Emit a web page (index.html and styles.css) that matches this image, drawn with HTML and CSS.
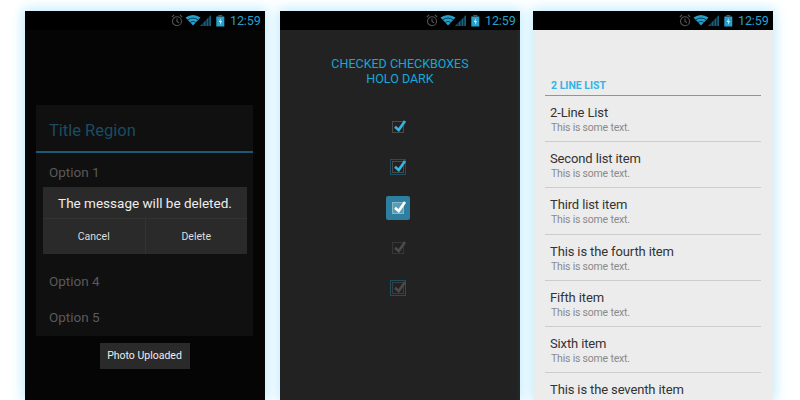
FILE: index.html
```html
<!DOCTYPE html>
<html lang="en">
<head>
<meta charset="utf-8">
<title>Holo UI</title>
<link rel="stylesheet" href="styles.css">
</head>
<body>
<svg class="defs" width="0" height="0" aria-hidden="true">
  <symbol id="status" viewBox="0 0 54 13">
    <g fill="none" stroke="#555" stroke-width="1.100">
      <circle cx="6" cy="7.200" r="4.500"/>
      <path d="M6 4.500v3l2 1.200M.8 3.200L3 1M11.200 3.200L9 1"/>
    </g>
    <path d="M14.500 3.600Q22 -1.600 29.500 3.600L22 11.600Z" fill="#27a0cc"/>
    <path d="M16.800 5.800Q22 2.400 27.200 5.800M19.200 8.300Q22 6.400 24.800 8.300" fill="none" stroke="#052733" stroke-width=".8"/>
    <path d="M29 12L40 1V12Z" fill="#175f7b"/>
    <path d="M32 12V8.500M35 12V5.500M37.800 12V3" stroke="#000" stroke-width=".7"/>
    <rect x="45.300" y="2.500" width="8" height="10" fill="#27a0cc"/>
    <rect x="47.300" y="1" width="4" height="1.500" fill="#555"/>
    <path d="M49.800 4L47.800 8H49.300L48.800 11.200L51.100 7H49.500Z" fill="#d5eef7"/>
  </symbol>
</svg>
<main class="row">
  <section class="phone phone-black">
    <header class="statusbar"><svg class="status-icons"><use href="#status"/></svg><span class="clock">12:59</span></header>
    <div class="dialog">
      <h2 class="dialog-title">Title Region</h2>
      <ul class="options">
        <li>Option 1</li>
        <li></li>
        <li></li>
        <li>Option 4</li>
        <li>Option 5</li>
      </ul>
      <div class="alert">
        <p class="alert-msg">The message will be deleted.</p>
        <div class="alert-actions">
          <span class="alert-btn">Cancel</span>
          <span class="alert-btn">Delete</span>
        </div>
      </div>
    </div>
    <div class="toast-row"><span class="toast">Photo Uploaded</span></div>
  </section>

  <section class="phone phone-dark">
    <header class="statusbar"><svg class="status-icons"><use href="#status"/></svg><span class="clock">12:59</span></header>
    <h2 class="cb-title">CHECKED CHECKBOXES<br>HOLO DARK</h2>
    <div class="cb-list">
      <svg class="cb" viewBox="0 0 24 24"><rect x="6.500" y="6.500" width="11" height="11" fill="none" stroke="#4a4a4a"/><path d="M9 11.800l3.700 3.200L19 6" fill="none" stroke="#33b5e5" stroke-width="2.600"/></svg>
      <svg class="cb" viewBox="0 0 24 24"><rect x="4.500" y="4.500" width="15" height="15" fill="none" stroke="#1d4e62"/><rect x="6.500" y="6.500" width="11" height="11" fill="none" stroke="#4a4a4a"/><path d="M9 11.800l3.700 3.200L19 6" fill="none" stroke="#33b5e5" stroke-width="2.600"/></svg>
      <svg class="cb" viewBox="0 0 24 24"><rect width="24" height="24" rx="2" fill="#2e7f9f"/><rect x="6.500" y="6.500" width="11" height="11" fill="#5b9bb4" stroke="#84b8cb"/><path d="M9 11.800l3.700 3.200L19 6" fill="none" stroke="#fff" stroke-width="2.600"/></svg>
      <svg class="cb" viewBox="0 0 24 24"><rect x="6.500" y="6.500" width="11" height="11" fill="none" stroke="#363636"/><path d="M9 11.800l3.700 3.200L19 6" fill="none" stroke="#4a4a4a" stroke-width="2.600"/></svg>
      <svg class="cb" viewBox="0 0 24 24"><rect x="4.500" y="4.500" width="15" height="15" fill="none" stroke="#1d4e62"/><rect x="6.500" y="6.500" width="11" height="11" fill="none" stroke="#3c3c3c"/><path d="M9 11.800l3.700 3.200L19 6" fill="none" stroke="#4a4a4a" stroke-width="2.600"/></svg>
    </div>
  </section>

  <section class="phone phone-light">
    <header class="statusbar"><svg class="status-icons"><use href="#status"/></svg><span class="clock">12:59</span></header>
    <h2 class="list-head">2 LINE LIST</h2>
    <ul class="list">
      <li><span class="l1">2-Line List</span><span class="l2">This is some text.</span></li>
      <li><span class="l1">Second list item</span><span class="l2">This is some text.</span></li>
      <li><span class="l1">Third list item</span><span class="l2">This is some text.</span></li>
      <li><span class="l1">This is the fourth item</span><span class="l2">This is some text.</span></li>
      <li><span class="l1">Fifth item</span><span class="l2">This is some text.</span></li>
      <li><span class="l1">Sixth item</span><span class="l2">This is some text.</span></li>
      <li><span class="l1">This is the seventh item</span></li>
    </ul>
  </section>
</main>
</body>
</html>
```
FILE: styles.css
```css
* { box-sizing: border-box; }
html, body { margin: 0; padding: 0; height: 400px; overflow: hidden; background: #fff; }
body { font-family: Roboto, "Liberation Sans", sans-serif; }
.defs { position: absolute; }
ul { list-style: none; margin: 0; padding: 0; }
h2, p { margin: 0; font-weight: 400; }

.row { display: flex; gap: 15px; padding: 11px 0 0 25px; }
.phone { width: 240px; height: 389px; flex: none; overflow: hidden; box-shadow: 0 0 12px 2px #bdebff; }
.phone + .phone + .phone { margin-left: -2px; }
.phone-black { background: #050505; }
.phone-dark { background: #222; }
.phone-light { background: #ececec; }

.statusbar { height: 19px; background: #000; display: flex; align-items: center; justify-content: flex-end; padding-right: 5px; }
.status-icons { width: 54px; height: 13px; margin-right: 5px; }
.clock { width: 30px; font-size: 12.500px; letter-spacing: -.1px; color: #27a0cc; white-space: nowrap; }

.dialog { position: relative; margin: 75px 12px 0 11px; height: 231px; background: #101010; }
.dialog-title { height: 48px; padding: 16px 13px 0; font-size: 16.500px; line-height: 19px; color: #1a4c63; border-bottom: 2px solid #1b5a75; }
.options { padding-top: 1px; }
.options li { height: 36.250px; padding-left: 13px; font-size: 13.500px; line-height: 36px; color: #5a5a5a; }
.alert { position: absolute; left: 7px; right: 6px; top: 82px; height: 67px; background: #2a2a2a; }
.alert-msg { height: 32px; text-align: center; font-size: 13.500px; line-height: 32px; color: #eee; border-bottom: 1px solid #333; }
.alert-actions { display: flex; height: 35px; }
.alert-btn { flex: 1; text-align: center; font-size: 10.500px; line-height: 35px; color: #ddd; }
.alert-btn + .alert-btn { border-left: 1px solid #333; }

.toast-row { display: flex; justify-content: center; margin-top: 7px; padding-right: 1px; }
.toast { width: 90px; height: 26px; background: #2a2a2a; color: #eee; font-size: 10.500px; line-height: 26px; text-align: center; }

.cb-title { margin-top: 26px; text-align: center; font-size: 12.500px; line-height: 15px; color: #14a8dc; }
.cb-list { display: flex; flex-direction: column; align-items: center; gap: 16.250px; margin-top: 29px; padding-right: 4px; }
.cb { width: 24px; height: 24px; flex: none; }

.list-head { margin: 49px 12px 0; padding: 0 6px 3px; font-size: 10.500px; line-height: 13px; font-weight: 700; color: #33b5e5; border-bottom: 1px solid #33b5e5; }
.list { margin: 0 12px; }
.list li { height: 46.200px; padding: 9px 5px 0; border-bottom: 1px solid #ccc; }
.l1 { display: block; font-size: 13px; letter-spacing: -.13px; line-height: 15px; color: #333; }
.l2 { display: block; margin-top: 2px; font-size: 10.500px; letter-spacing: -.2px; line-height: 12px; color: #8a8a8a; padding-left: 1px; }
```
